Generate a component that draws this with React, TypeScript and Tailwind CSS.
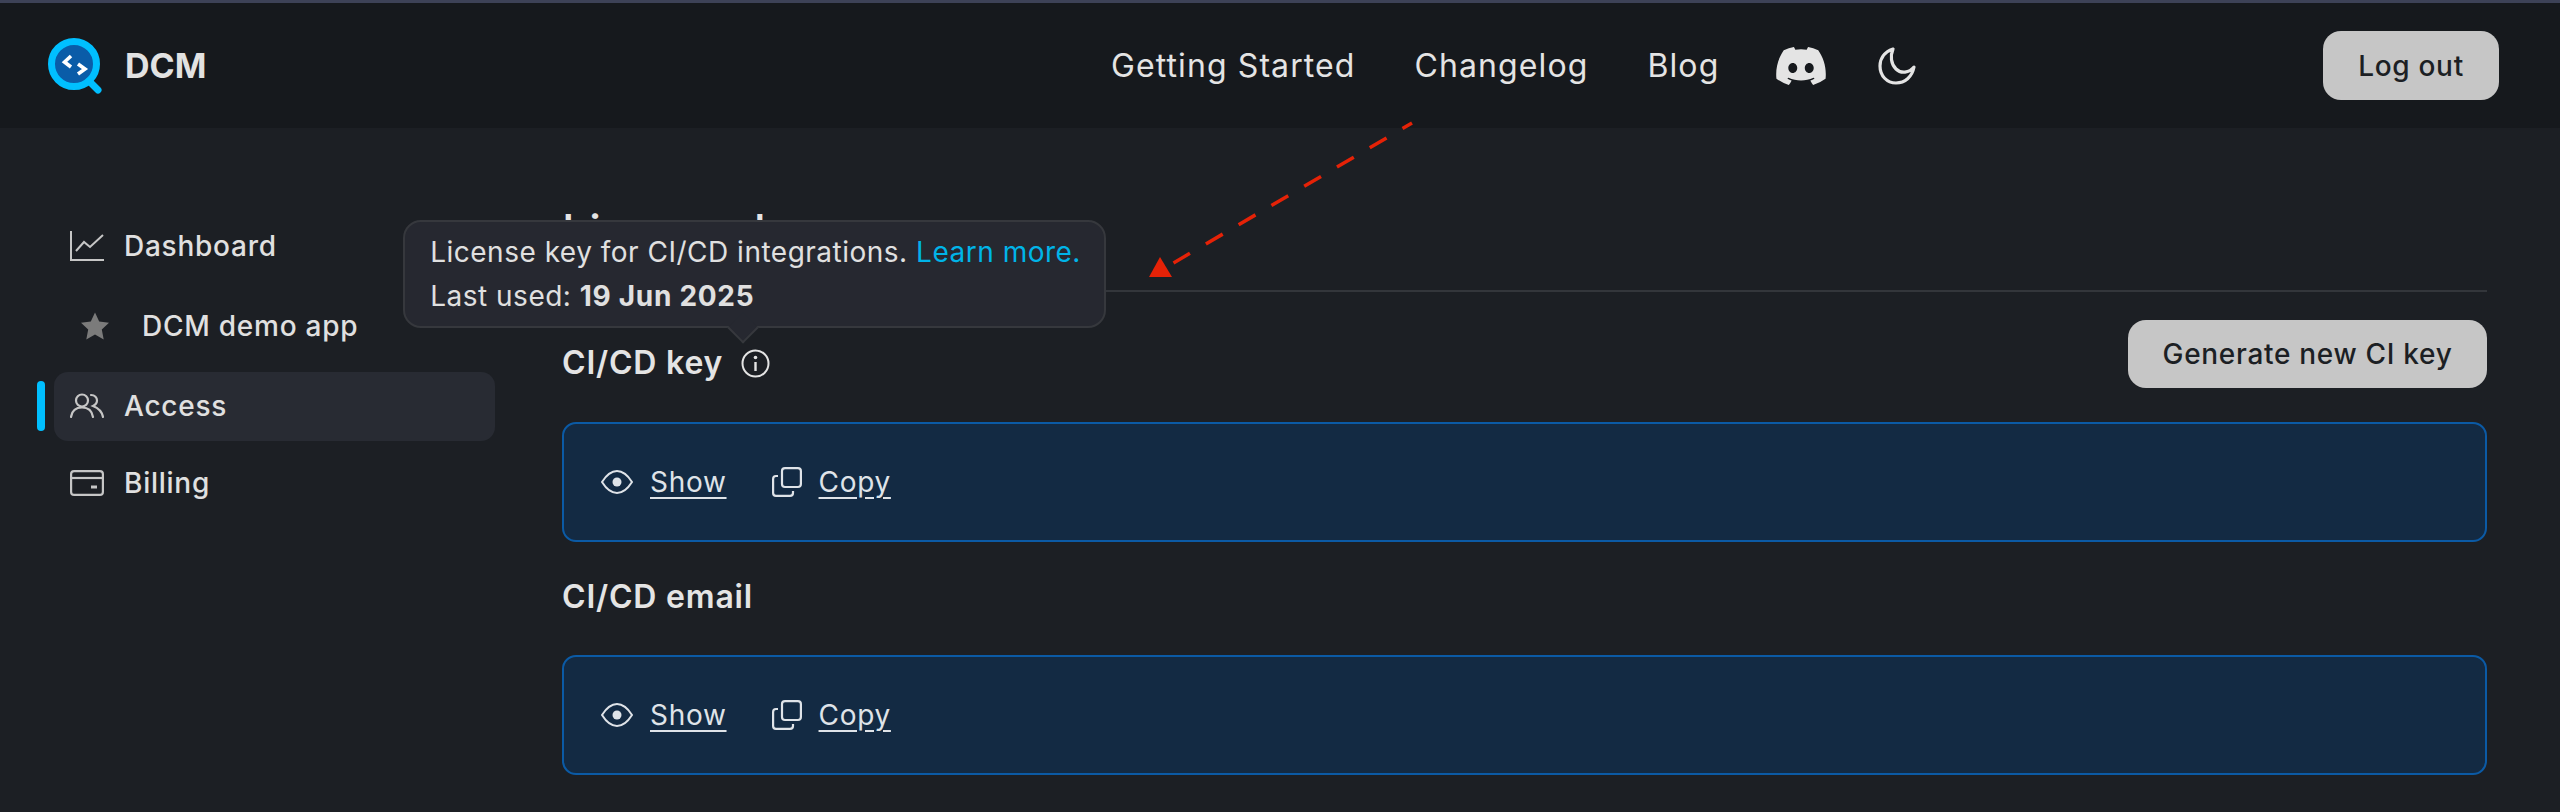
import React from "react";
import { FaDiscord } from "react-icons/fa";

const Logo = () => (
  <svg width="54" height="56" viewBox="0 0 54 56" fill="none">
    <circle cx="26" cy="26" r="22.5" fill="#0a5ca8" stroke="#00bfff" strokeWidth="7" />
    <path d="M41 43 L50 52" stroke="#00bfff" strokeWidth="7" strokeLinecap="round" />
    <path d="M23 18 L16.5 24 L23 29" stroke="#fff" strokeWidth="3.6" fill="none" />
    <path d="M30 26 L37 31 L30 36" stroke="#fff" strokeWidth="3.6" fill="none" />
  </svg>
);

const Moon = () => (
  <svg width="38" height="38" viewBox="0 0 38 38" fill="none" stroke="#e4e4e4" strokeWidth="3.2">
    <path d="M15 2 C6 5 2 12 2 19 C2 29 9 36 18 36 C27 36 34 30 36 20 C31 26 23 27 18 22 C13 17 12 9 15 2 Z" strokeLinejoin="round" />
  </svg>
);

const ChartIcon = () => (
  <svg width="34" height="30" viewBox="0 0 34 30" fill="none" stroke="#c6c6c6" strokeWidth="2">
    <path d="M1 0 V29 H34" />
    <path d="M6 20 L14 11 L20 16 L33 4" />
  </svg>
);

const UsersIcon = () => (
  <svg width="34" height="26" viewBox="0 0 34 26" fill="none" stroke="#c6c6c6" strokeWidth="2.2" strokeLinecap="round">
    <circle cx="12" cy="7.5" r="6" />
    <path d="M1 24 C2 17 6 14.5 12 14.5 C18 14.5 22 17 23 24" />
    <path d="M21 2 C25 2 27 5 27 7.5 C27 10 25 12 23 13 C28 15 32 18 33 24" />
  </svg>
);

const CardIcon = () => (
  <svg width="34" height="26" viewBox="0 0 34 26" fill="none" stroke="#c6c6c6" strokeWidth="2.2">
    <rect x="1.1" y="1.1" width="31.8" height="23.8" rx="3" />
    <path d="M1 8 H33" />
    <path d="M21 17 H27" strokeWidth="3" />
  </svg>
);

const StarIcon = () => (
  <svg width="28" height="28" viewBox="0 0 28 28" fill="#7b7b7b">
    <path d="M14 0.5 L18.2 9.6 L28 10.8 L20.8 17.6 L22.7 27.5 L14 22.6 L5.3 27.5 L7.2 17.6 L0 10.8 L9.8 9.6 Z" />
  </svg>
);

const EyeIcon = () => (
  <svg width="32" height="24" viewBox="0 0 32 24" fill="none" stroke="#dfe3e8" strokeWidth="2">
    <path d="M1 12 C6 4 11 1 16 1 C21 1 26 4 31 12 C26 20 21 23 16 23 C11 23 6 20 1 12 Z" />
    <circle cx="16" cy="12" r="4.5" fill="#dfe3e8" stroke="none" />
  </svg>
);

const CopyIcon = () => (
  <svg width="30" height="30" viewBox="0 0 30 30" fill="none" stroke="#dfe3e8" strokeWidth="2.2">
    <rect x="10" y="1.1" width="18.9" height="18.9" rx="3" />
    <path d="M6 9 H4 C2.3 9 1.1 10.3 1.1 12 V26 C1.1 27.7 2.3 28.9 4 28.9 H18 C19.7 28.9 21 27.7 21 26 V24" />
  </svg>
);

const InfoIcon = () => (
  <svg width="29" height="29" viewBox="0 0 29 29" fill="none" stroke="#e4e4e4" strokeWidth="2">
    <circle cx="14.5" cy="14.5" r="13" />
    <path d="M14.5 13 V22" strokeWidth="2.4" />
    <circle cx="14.5" cy="8.5" r="1.8" fill="#e4e4e4" stroke="none" />
  </svg>
);

const SideItem = ({ icon, label, active, star, className }: { icon: React.ReactNode; label: string; active?: boolean; star?: boolean; className?: string }) => (
  <div className={`relative h-[69px] w-[441px] ${className ?? ""}`}>
    {active && <div className="absolute left-[-17px] top-[9px] h-[50px] w-[8px] rounded-full bg-[#00bfff]" />}
    <div className={`flex h-full items-center rounded-[14px] pb-[2px] text-[28px] font-medium tracking-[0.75px] text-[#e0e0e0] ${star ? "pl-[27px]" : "pl-[16px]"} ${active ? "bg-[#282b33]" : ""}`}>
      <span className={`flex shrink-0 items-center ${star ? "w-[61px]" : "w-[54px]"}`}>{icon}</span>
      <span>{label}</span>
    </div>
  </div>
);

const SecretBox = () => (
  <div className="flex h-[120px] items-center gap-[45px] rounded-[14px] border-2 border-[#0b5aa5] bg-[#132a43] pl-[37px] text-[28px] tracking-wide text-[#dfe3e8]">
    <a className="flex items-center gap-[17px]">
      <EyeIcon />
      <span className="underline underline-offset-[5px]">Show</span>
    </a>
    <a className="flex items-center gap-[17px]">
      <CopyIcon />
      <span className="underline underline-offset-[5px]">Copy</span>
    </a>
  </div>
);

export default function App() {
  return (
    <div className="relative h-[812px] w-full overflow-hidden bg-[#1c1f24] font-[Inter,sans-serif]">
      <div className="h-[3px] bg-[#3d4257]" />
      <header className="flex h-[125px] items-center justify-between bg-[#16191d] pl-[48px] pr-[61px]">
        <div className="flex w-[500px] items-center gap-[23px]">
          <Logo />
          <span className="text-[34px] font-bold text-[#e2e2e2]">DCM</span>
        </div>
        <nav className="absolute left-[1111px] top-[3px] flex h-[125px] items-center text-[32px] tracking-[1.1px] text-[#e4e4e4]">
          <span className="mr-[59px]">Getting Started</span>
          <span className="mr-[59px]">Changelog</span>
          <span className="mr-[55px]">Blog</span>
          <FaDiscord className="mr-[50px] text-[54px]" />
          <Moon />
        </nav>
        <button className="h-[69px] w-[176px] rounded-[18px] bg-[#c6c6c6] text-[28px] font-medium tracking-wide text-[#1c1f24]">Log out</button>
      </header>

      <div className="flex">
        <aside className="ml-[54px] flex w-[508px] shrink-0 flex-col gap-[11px] pt-[84px]">
          <SideItem icon={<ChartIcon />} label="Dashboard" />
          <SideItem star icon={<StarIcon />} label="DCM demo app" />
          <SideItem active icon={<UsersIcon />} label="Access" />
          <SideItem className="mt-[-3px]" icon={<CardIcon />} label="Billing" />
        </aside>

        <main className="mr-[73px] flex-1 pt-[72px]">
          <div className="flex h-[92px] items-start border-b-2 border-[#33363b]">
            <h1 className="text-[46px] font-medium leading-[62px] tracking-wide text-[#e4e4e4]">License keys</h1>
          </div>

          <div className="mt-[28px] flex h-[68px] items-center justify-between">
            <div className="flex items-center gap-[18px] pt-[18px]">
              <h2 className="text-[32px] font-semibold tracking-wide text-[#e4e4e4]">CI/CD key</h2>
              <span className="relative flex">
                <InfoIcon />
                <div className="absolute bottom-[50px] left-[-338px] h-[108px] w-[703px] rounded-[18px] border-2 border-[#36383d] bg-[#262830] px-[25px] py-[8px] text-[28px] leading-[44px] tracking-[0.5px] text-[#e0e0e0]">
                  <div className="whitespace-nowrap">
                    License key for CI/CD integrations. <span className="text-[#00b4e8]">Learn more.</span>
                  </div>
                  <div>
                    Last used: <b className="font-bold tracking-[0.7px]">19 Jun 2025</b>
                  </div>
                  <div className="absolute bottom-[-13px] left-[327px] h-[22px] w-[22px] rotate-45 border-b-2 border-r-2 border-[#36383d] bg-[#262830]" />
                </div>
              </span>
            </div>
            <button className="h-[68px] w-[359px] rounded-[18px] bg-[#c6c6c6] text-[28px] font-medium tracking-wide text-[#1c1f24]">Generate new CI key</button>
          </div>

          <div className="mt-[34px]">
            <SecretBox />
          </div>

          <h2 className="mt-[35px] h-[40px] text-[32px] font-semibold leading-[40px] tracking-wide text-[#e4e4e4]">CI/CD email</h2>

          <div className="mt-[38px]">
            <SecretBox />
          </div>
        </main>
      </div>

      <svg className="pointer-events-none absolute left-0 top-0" width="1500" height="300" fill="none">
        <path d="M1412 123 L1173.5 263" stroke="#e52207" strokeWidth="3.5" strokeDasharray="19.5 18.5" strokeDashoffset="8.5" />
        <path d="M1160 257 L1172 277 L1149 277 Z" fill="#e52207" />
      </svg>
    </div>
  );
}
